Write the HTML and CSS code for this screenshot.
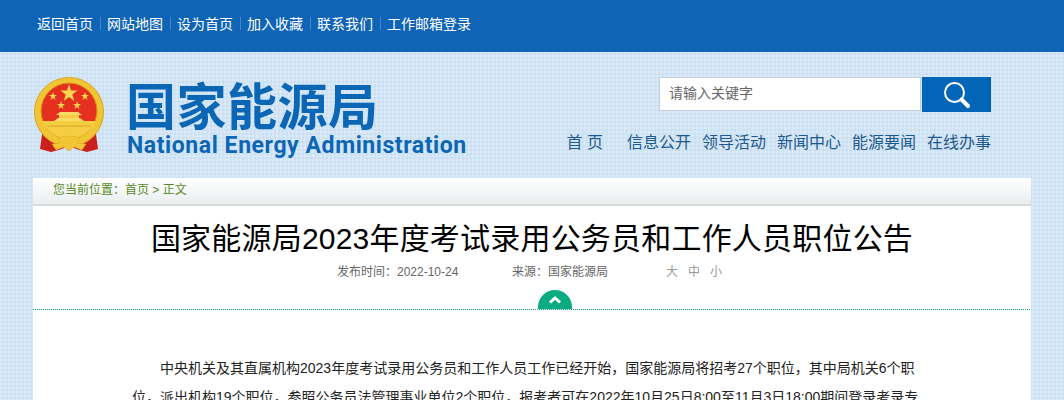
FILE: index.html
```html
<!DOCTYPE html>
<html lang="zh-CN">
<head>
    <meta charset="UTF-8">
    <meta name="viewport" content="width=device-width, initial-scale=1.0">
    <title>国家能源局2023年度考试录用公务员和工作人员职位公告</title>
    <link rel="stylesheet" href="styles.css">
</head>
<body>
    <div class="topbar">
        <div class="wrap topbar-links">
            <a>返回首页</a><i></i>
            <a>网站地图</a><i></i>
            <a>设为首页</a><i></i>
            <a>加入收藏</a><i></i>
            <a>联系我们</a><i></i>
            <a>工作邮箱登录</a>
        </div>
    </div>

    <div class="wrap header">
        <div class="logo">
            <svg class="emblem" width="72" height="76" viewBox="0 0 72 76">
                <!-- ribbons -->
                <path d="M10 50 L7 72 L18 75 L29 72 L36 68 L43 72 L54 75 L65 72 L62 50 Z" fill="#c9201c"/>
                <!-- ring and red field -->
                <circle cx="36" cy="35" r="34.500" fill="#f2c535" stroke="#dca422" stroke-width="1"/>
                <circle cx="36" cy="34" r="28" fill="#e5301f" stroke="#cf9a1a" stroke-width="1"/>
                <!-- gate -->
                <path d="M9 44 H63 C59 54 48 62 36 62 C24 62 13 54 9 44 Z" fill="#f4cd42"/>
                <path d="M21 44 L25 41 H47 L51 44 Z" fill="#f9dc68"/>
                <path d="M26 41 V38 H46 V41 Z" fill="#f4cd42"/>
                <path d="M23 38 H49 L45 35 H27 Z" fill="#f9dc68"/>
                <path d="M14 49 H58" stroke="#dca422" stroke-width="1"/>
                <!-- knot at the bottom -->
                <path d="M36 60 C32 58 28 60 25 62 L28 66 L19 67 L23 73 L31 70 L36 74 L41 70 L49 73 L53 67 L44 66 L47 62 C44 60 40 58 36 60 Z" fill="#f2c535" stroke="#dca422" stroke-width="0.500"/>
                <!-- stars -->
                <polygon points="36,7 38,13.500 44.500,13.500 39.300,17.500 41.300,24 36,20 30.700,24 32.700,17.500 27.500,13.500 34,13.500" fill="#f8d64e"/>
                <polygon points="20,15 21,18 24,18 21.500,20 22.500,23 20,21 17.500,23 18.500,20 16,18 19,18" fill="#f8d64e"/>
                <polygon points="52,15 53,18 56,18 53.500,20 54.500,23 52,21 49.500,23 50.500,20 48,18 51,18" fill="#f8d64e"/>
                <polygon points="28,24 29,27 32,27 29.500,29 30.500,32 28,30 25.500,32 26.500,29 24,27 27,27" fill="#f8d64e"/>
                <polygon points="44,24 45,27 48,27 45.500,29 46.500,32 44,30 41.500,32 42.500,29 40,27 43,27" fill="#f8d64e"/>
            </svg>
            <div class="logo-text">
                <div class="logo-cn">国家能源局</div>
                <div class="logo-en">National Energy Administration</div>
            </div>
        </div>
        <div class="header-right">
            <div class="search">
                <div class="search-input">请输入关键字</div>
                <div class="search-btn">
                    <svg width="28" height="28" viewBox="0 0 28 28">
                        <circle cx="11.500" cy="11.500" r="9.500" fill="none" stroke="#fff" stroke-width="2"/>
                        <path d="M18.500 18.500 L25 25" stroke="#fff" stroke-width="4" stroke-linecap="round"/>
                    </svg>
                </div>
            </div>
            <div class="nav">
                <a class="nav-home">首 页</a>
                <a>信息公开</a>
                <a>领导活动</a>
                <a>新闻中心</a>
                <a>能源要闻</a>
                <a>在线办事</a>
            </div>
        </div>
    </div>

    <div class="wrap">
        <div class="crumb">您当前位置：首页 &gt; 正文</div>
        <div class="article">
            <div class="article-head">
                <h1>国家能源局2023年度考试录用公务员和工作人员职位公告</h1>
                <div class="meta">
                    <span class="meta-date">发布时间：2022-10-24</span>
                    <span class="meta-source">来源：国家能源局</span>
                    <span class="meta-size"><span>大</span><span>中</span><span>小</span></span>
                </div>
                <div class="toggle">
                    <svg width="14" height="9" viewBox="0 0 14 9">
                        <path d="M2 7.500 L7 3 L12 7.500" fill="none" stroke="#fff" stroke-width="3"/>
                    </svg>
                </div>
            </div>
            <div class="article-body">
                <p>中央机关及其直属机构2023年度考试录用公务员和工作人员工作已经开始，国家能源局将招考27个职位，其中局机关6个职位，派出机构19个职位，参照公务员法管理事业单位2个职位，报考者可在2022年10月25日8:00至11月3日18:00期间登录考录专题网站报名。</p>
            </div>
        </div>
    </div>
</body>
</html>
```

FILE: styles.css
```css
body {
    margin: 0;
    padding: 0;
    font-family: "Liberation Sans", "Noto Sans CJK SC", sans-serif;
    color: #000;
    background-color: #c9dff3;
    background-image:
        repeating-linear-gradient(0deg, rgba(255, 255, 255, 0.18) 0, rgba(255, 255, 255, 0.18) 2px, transparent 2px, transparent 4px),
        repeating-linear-gradient(90deg, rgba(255, 255, 255, 0.18) 0, rgba(255, 255, 255, 0.18) 2px, transparent 2px, transparent 4px);
}
.wrap {
    width: 1000px;
    margin: 0 auto;
}

/* top bar */
.topbar {
    height: 52px;
    background-color: #0f64b6;
}
.topbar-links {
    display: flex;
    align-items: center;
    height: 46px;
    padding-left: 5px;
    box-sizing: border-box;
    font-size: 14px;
    color: #fff;
}
.topbar-links i {
    width: 1px;
    height: 13px;
    margin: 0 6px 0 7px;
    background-color: #3f86cc;
}

/* header */
.header {
    display: flex;
    justify-content: space-between;
    height: 126px;
}
.logo {
    display: flex;
    padding-top: 25px;
}
.emblem {
    margin-left: 1px;
}
.logo-text {
    margin-left: 21px;
    color: #0b66b5;
}
.logo-cn {
    font-size: 50px;
    line-height: 52px;
    font-weight: 700;
    letter-spacing: 0.5px;
    font-family: "Noto Sans CJK SC", sans-serif;
}
.logo-en {
    margin: 4px 0 0 1px;
    font-family: "Roboto", sans-serif;
    font-size: 23px;
    line-height: 26px;
    font-weight: 700;
    letter-spacing: 0.58px;
    white-space: nowrap;
}
.header-right {
    width: 332px;
    padding-top: 25px;
    margin-right: 41px;
}
.search {
    display: flex;
    height: 35px;
}
.search-input {
    width: 262px;
    height: 34px;
    box-sizing: border-box;
    border: 1px solid #c5ced8;
    background-color: #fff;
    padding-left: 9px;
    font-size: 14px;
    line-height: 31px;
    color: #666;
}
.search-btn {
    display: flex;
    align-items: center;
    justify-content: center;
    width: 69px;
    margin-left: 1px;
    background-color: #0265b8;
}
.nav {
    display: flex;
    justify-content: flex-end;
    gap: 11px;
    margin-top: 19px;
    font-size: 16px;
    line-height: 24px;
    color: #1f5a8e;
    white-space: nowrap;
}
.nav-home {
    margin-right: 13px;
}

/* article */
.crumb {
    height: 28px;
    margin-left: 1px;
    width: 998px;
    box-sizing: border-box;
    padding-left: 20px;
    background: linear-gradient(#fff, #eaeeef);
    border-bottom: 2px solid #d7d9da;
    font-size: 12px;
    line-height: 25px;
    color: #5a8a1e;
}
.article {
    margin-left: 1px;
    width: 998px;
    background-color: #fff;
}
.article-head {
    position: relative;
    height: 104px;
    box-sizing: border-box;
    text-align: center;
    background: repeating-linear-gradient(90deg, #0f9c86 0, #0f9c86 1px, transparent 1px, transparent 2px) bottom / 100% 1px no-repeat;
}
.article-head h1 {
    margin: 0;
    padding-top: 13px;
    font-size: 30px;
    line-height: 40px;
    font-weight: 400;
    letter-spacing: 0.2px;
}
.meta {
    display: flex;
    margin-top: 4px;
    padding-left: 304px;
    font-size: 12px;
    line-height: 18px;
    color: #666;
}
.meta-date {
    width: 175px;
    text-align: left;
}
.meta-source {
    width: 154px;
    text-align: left;
}
.meta-size {
    display: flex;
    gap: 10px;
    color: #999;
}
.toggle {
    position: absolute;
    left: 505px;
    bottom: 1px;
    width: 34px;
    height: 19px;
    border-radius: 17px 17px 0 0;
    background-color: #0cab82;
    text-align: center;
}
.toggle svg {
    display: block;
    margin: 5px auto 0;
}
.article-body {
    padding: 44px 110px 0 99px;
    font-size: 14px;
    line-height: 29px;
    color: #222;
}
.article-body p {
    margin: 0;
    text-indent: 28px;
}
```
